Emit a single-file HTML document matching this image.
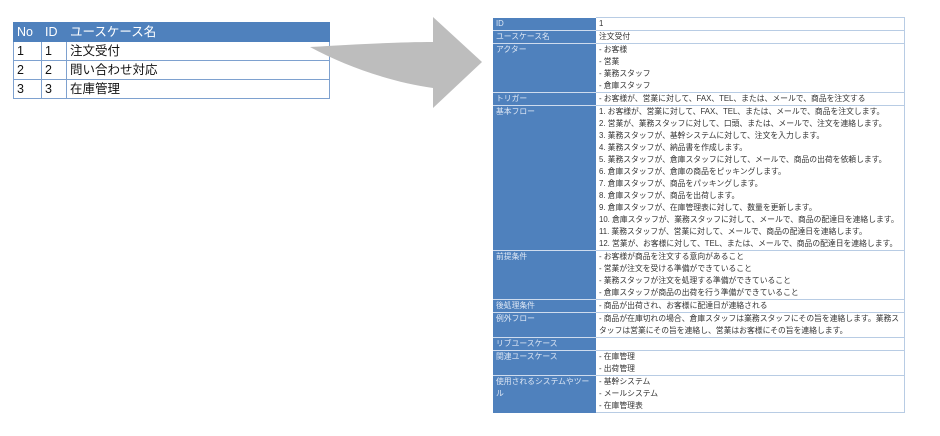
<!DOCTYPE html>
<html><head><meta charset="utf-8"><style>
body{margin:0;width:940px;height:436px;background:#fff;position:relative;overflow:hidden;font-family:"Liberation Sans","Noto Sans CJK JP",sans-serif}
table{border-collapse:collapse;position:absolute}
#t1{left:13px;top:22px;width:317px;font-size:12.5px;color:#111}
#t1 td{border:1px solid #7ea1cf;height:18px;padding:0 3px;line-height:18px}
#t1 tr.h td{background:#4f81bd;color:#fff;border-color:#4f81bd}
#t2{left:493px;top:17px;width:412px;font-size:7.8px;color:#333}
#t2 td{padding:0 3px;line-height:12px;vertical-align:top}
#t2 td.l{background:#4f81bd;color:#dfe8f5;width:97px;border-bottom:1px solid #cfdcee}
#t2 td.v{border:1px solid #b8cce4;border-left:none}
</style></head><body>
<table id="t1">
<tr class="h"><td style="width:21px">No</td><td style="width:18px">ID</td><td>ユースケース名</td></tr>
<tr><td>1</td><td>1</td><td>注文受付</td></tr>
<tr><td>2</td><td>2</td><td>問い合わせ対応</td></tr>
<tr><td>3</td><td>3</td><td>在庫管理</td></tr>
</table>
<svg style="position:absolute;left:0;top:0" width="940" height="436">
<path d="M310,47 C360,44 400,42 433,42 L433,17 L482,62 L433,108 L433,88 C390,82 345,66 310,47 Z" fill="#bdbdbd"/>
</svg>
<table id="t2">
<tr><td class="l">ID</td><td class="v">1</td></tr>
<tr><td class="l">ユースケース名</td><td class="v">注文受付</td></tr>
<tr><td class="l">アクター</td><td class="v">- お客様<br>- 営業<br>- 業務スタッフ<br>- 倉庫スタッフ</td></tr>
<tr><td class="l">トリガー</td><td class="v">- お客様が、営業に対して、FAX、TEL、または、メールで、商品を注文する</td></tr>
<tr><td class="l">基本フロー</td><td class="v">1. お客様が、営業に対して、FAX、TEL、または、メールで、商品を注文します。<br>2. 営業が、業務スタッフに対して、口頭、または、メールで、注文を連絡します。<br>3. 業務スタッフが、基幹システムに対して、注文を入力します。<br>4. 業務スタッフが、納品書を作成します。<br>5. 業務スタッフが、倉庫スタッフに対して、メールで、商品の出荷を依頼します。<br>6. 倉庫スタッフが、倉庫の商品をピッキングします。<br>7. 倉庫スタッフが、商品をパッキングします。<br>8. 倉庫スタッフが、商品を出荷します。<br>9. 倉庫スタッフが、在庫管理表に対して、数量を更新します。<br>10. 倉庫スタッフが、業務スタッフに対して、メールで、商品の配達日を連絡します。<br>11. 業務スタッフが、営業に対して、メールで、商品の配達日を連絡します。<br>12. 営業が、お客様に対して、TEL、または、メールで、商品の配達日を連絡します。</td></tr>
<tr><td class="l">前提条件</td><td class="v">- お客様が商品を注文する意向があること<br>- 営業が注文を受ける準備ができていること<br>- 業務スタッフが注文を処理する準備ができていること<br>- 倉庫スタッフが商品の出荷を行う準備ができていること</td></tr>
<tr><td class="l">後処理条件</td><td class="v">- 商品が出荷され、お客様に配達日が連絡される</td></tr>
<tr><td class="l">例外フロー</td><td class="v">- 商品が在庫切れの場合、倉庫スタッフは業務スタッフにその旨を連絡します。業務スタッフは営業にその旨を連絡し、営業はお客様にその旨を連絡します。</td></tr>
<tr><td class="l">リブユースケース</td><td class="v">&nbsp;</td></tr>
<tr><td class="l">関連ユースケース</td><td class="v">- 在庫管理<br>- 出荷管理</td></tr>
<tr><td class="l" style="border-bottom:none">使用されるシステムやツール</td><td class="v">- 基幹システム<br>- メールシステム<br>- 在庫管理表</td></tr>
</table>
</body></html>
